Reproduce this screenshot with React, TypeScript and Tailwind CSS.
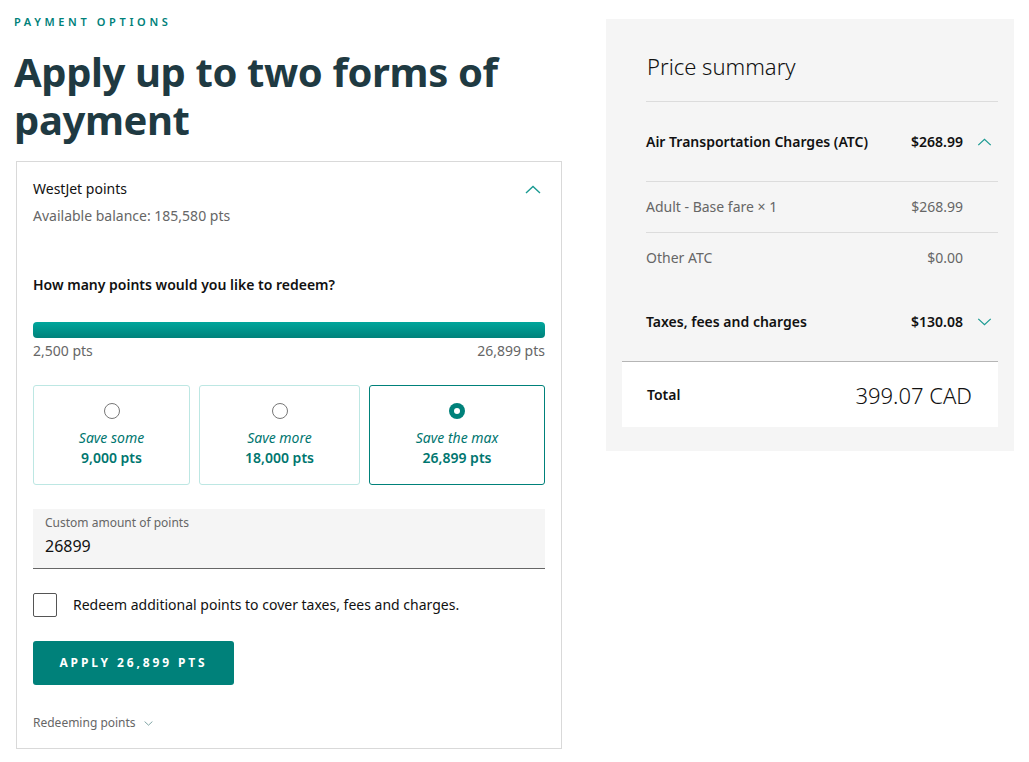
import React from 'react';

const TEAL = '#00817a';

function Chevron({ up = false, className = '' }: { up?: boolean; className?: string }) {
  return (
    <svg viewBox="0 0 16 9" className={className} fill="none" stroke="currentColor" strokeWidth="1.4">
      {up ? <path d="M1 8 L8 1.5 L15 8" /> : <path d="M1 1 L8 7.5 L15 1" />}
    </svg>
  );
}

function Option({ label, pts, selected = false, width }: { label: string; pts: string; selected?: boolean; width: string }) {
  return (
    <div
      className={`${width} flex flex-col items-center pt-[17px] pb-[16px] rounded-[3px] border ${
        selected ? 'border-[#00817a]' : 'border-[#bde7e3]'
      }`}
    >
      {selected ? (
        <span className="w-[16px] h-[16px] rounded-full bg-[#00817a] flex items-center justify-center">
          <span className="w-[6px] h-[6px] rounded-full bg-white" />
        </span>
      ) : (
        <span className="w-[16px] h-[16px] rounded-full border border-[#777]" />
      )}
      <span className="mt-[9px] text-[14px] leading-[20px] italic text-[#00766f]">{label}</span>
      <span className="text-[14px] leading-[20px] font-semibold text-[#00766f]">{pts}</span>
    </div>
  );
}

function SummaryRow({ label, amount, bold = false, chevron, className = '' }: {
  label: string; amount: string; bold?: boolean; chevron?: 'up' | 'down'; className?: string;
}) {
  return (
    <div className={`flex items-center ${className}`}>
      <span className={`flex-1 text-[14px] leading-[20px] ${bold ? 'font-semibold text-[#111]' : 'text-[#666]'}`}>{label}</span>
      <span className={`text-[14px] leading-[20px] ${bold ? 'font-semibold text-[#111]' : 'text-[#666]'}`}>{amount}</span>
      <span className="w-[35px] flex justify-end pr-[6px]">
        {chevron && <Chevron up={chevron === 'up'} className="w-[15px] h-[8px] text-[#1a9a92]" />}
      </span>
    </div>
  );
}

export default function App() {
  return (
    <div className="min-h-screen bg-white flex" style={{ fontFamily: '"Noto Sans", "Open Sans", sans-serif' }}>
      {/* ── Columna izquierda ── */}
      <div className="w-[562px] pl-[14px] pt-[14px] shrink-0">
        <p className="text-[11px] leading-[16px] font-semibold tracking-[0.33em] text-[#00817a]">PAYMENT OPTIONS</p>
        <h1 className="mt-[18px] text-[40px] leading-[48px] font-bold text-[#1f3a42] tracking-[-0.01em]">
          Apply up to two forms of
          <br />
          payment
        </h1>

        <div className="mt-[17px] ml-[2px] border border-[#d9d9d9] px-[16px] pt-[17px] pb-[17px]">
          <div className="flex items-center justify-between">
            <span className="text-[14px] leading-[20px] text-[#111]">WestJet points</span>
            <Chevron up className="w-[16px] h-[9px] mr-[4px] text-[#1a9a92]" />
          </div>
          <p className="mt-[7px] text-[14px] leading-[20px] text-[#666]">Available balance: 185,580 pts</p>

          <p className="mt-[49px] text-[14px] leading-[20px] font-semibold text-[#111]">
            How many points would you like to redeem?
          </p>

          <div className="mt-[27px] h-[16px] rounded-[4px] bg-gradient-to-b from-[#00a69c] to-[#00827b]" />
          <div className="mt-[3px] flex justify-between text-[14px] leading-[20px] text-[#666]">
            <span>2,500 pts</span>
            <span>26,899 pts</span>
          </div>

          <div className="mt-[24px] flex gap-[9px]">
            <Option label="Save some" pts="9,000 pts" width="w-[157px]" />
            <Option label="Save more" pts="18,000 pts" width="w-[161px]" />
            <Option label="Save the max" pts="26,899 pts" width="flex-1" selected />
          </div>

          <div className="mt-[24px] h-[60px] bg-[#f5f5f5] border-b border-[#666] px-[12px] pt-[6px]">
            <p className="text-[12px] leading-[16px] text-[#666]">Custom amount of points</p>
            <p className="mt-[3px] text-[16px] leading-[24px] text-[#111]">26899</p>
          </div>

          <label className="mt-[24px] flex items-center gap-[16px]">
            <span className="w-[24px] h-[24px] border border-[#555] rounded-[2px] shrink-0" />
            <span className="text-[14px] leading-[20px] text-[#111]">Redeem additional points to cover taxes, fees and charges.</span>
          </label>

          <button
            className="mt-[24px] w-[201px] h-[44px] rounded-[3px] text-white text-[12px] font-bold tracking-[0.24em] flex items-center justify-center"
            style={{ backgroundColor: TEAL }}
          >
            APPLY 26,899 PTS
          </button>

          <div className="mt-[30px] flex items-center gap-[8px] text-[12px] leading-[16px] text-[#666]">
            <span>Redeeming points</span>
            <Chevron className="w-[9px] h-[5px] text-[#5a8a8a]" />
          </div>
        </div>
      </div>

      {/* ── Resumen de precio ── */}
      <div className="ml-[44px] mt-[19px] w-[408px] self-start bg-[#f5f5f5] pl-[16px] pr-[16px] pb-[24px]">
        <div className="pl-[24px]">
          <h2 className="pt-[33px] text-[22px] leading-[28px] font-light text-[#111] pl-[1px]">Price summary</h2>
          <div className="mt-[21px] border-t border-[#dcdcdc]" />
          <SummaryRow label="Air Transportation Charges (ATC)" amount="$268.99" bold chevron="up" className="h-[79px]" />
          <div className="border-t border-[#dcdcdc]" />
          <SummaryRow label="Adult - Base fare × 1" amount="$268.99" className="h-[50px]" />
          <div className="border-t border-[#dcdcdc]" />
          <SummaryRow label="Other ATC" amount="$0.00" className="h-[50px]" />
          <SummaryRow label="Taxes, fees and charges" amount="$130.08" bold chevron="down" className="h-[78px]" />
        </div>
        <div className="border-t border-[#b5b5b5] bg-white h-[66px] flex items-center pl-[25px] pr-[26px]">
          <span className="flex-1 text-[14px] font-semibold text-[#111]">Total</span>
          <span className="text-[22px] leading-[28px] font-light text-[#111]">399.07 CAD</span>
        </div>
      </div>
    </div>
  );
}
